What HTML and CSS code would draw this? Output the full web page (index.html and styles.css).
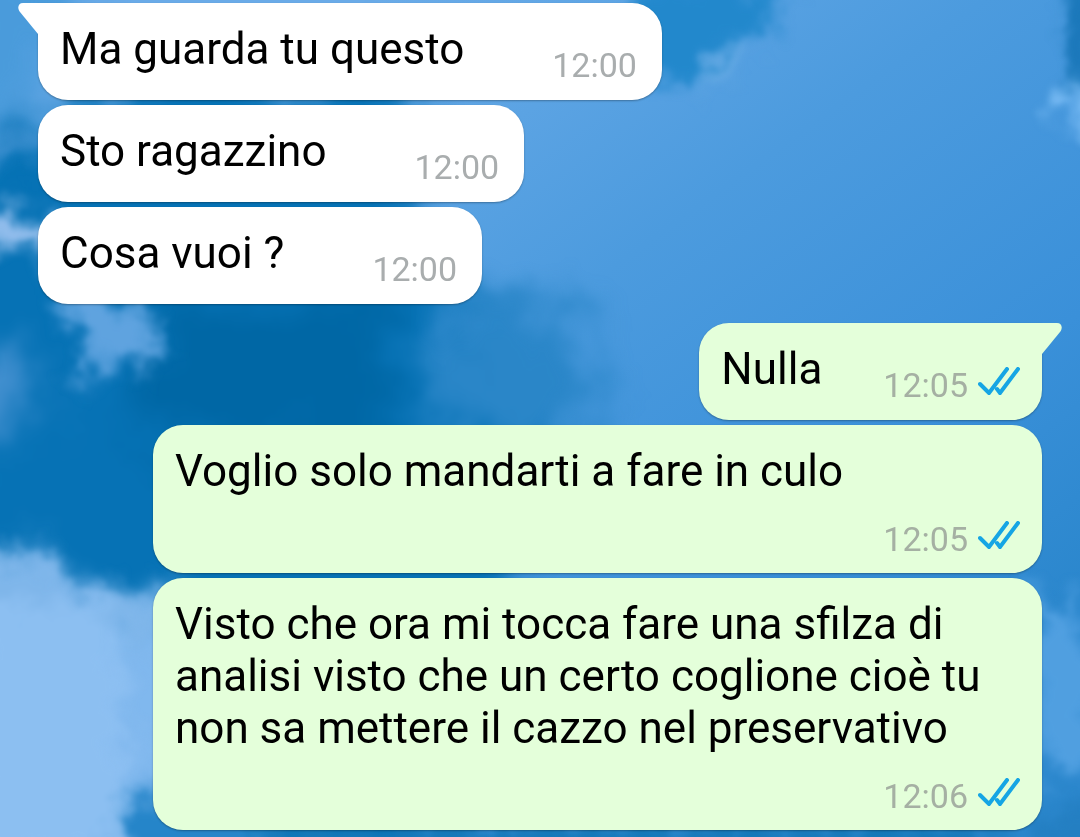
FILE: index.html
```
<!DOCTYPE html>
<html lang="it">
<head>
    <meta charset="UTF-8" />
    <meta name="viewport" content="width=device-width, initial-scale=1" />
    <title>Chat</title>
    <link rel="stylesheet" href="styles.css">
</head>
<body>
    <!-- sky wallpaper -->
    <svg class="wallpaper" viewBox="0 0 1080 837" preserveAspectRatio="none" aria-hidden="true">
        <defs>
            <linearGradient id="sky" x1="0.35" y1="0" x2="1" y2="0.7">
                <stop offset="0" stop-color="#6aabe8" />
                <stop offset="0.4" stop-color="#4c9bde" />
                <stop offset="0.75" stop-color="#3a90d9" />
                <stop offset="1" stop-color="#2b87cd" />
            </linearGradient>
            <filter id="soft" x="-30%" y="-30%" width="160%" height="160%" color-interpolation-filters="sRGB">
                <feTurbulence type="fractalNoise" baseFrequency="0.015" numOctaves="4" seed="3" result="noise" />
                <feGaussianBlur in="SourceGraphic" stdDeviation="20" result="blurred" />
                <feDisplacementMap in="blurred" in2="noise" scale="90" xChannelSelector="R" yChannelSelector="G" />
                <feGaussianBlur stdDeviation="3" />
            </filter>
            <filter id="cloud" x="-40%" y="-40%" width="180%" height="180%" color-interpolation-filters="sRGB">
                <feTurbulence type="fractalNoise" baseFrequency="0.03" numOctaves="4" seed="8" result="noise" />
                <feGaussianBlur in="SourceGraphic" stdDeviation="9" result="blurred" />
                <feDisplacementMap in="blurred" in2="noise" scale="55" xChannelSelector="R" yChannelSelector="G" />
                <feGaussianBlur stdDeviation="2" />
            </filter>
        </defs>
        <rect width="1080" height="837" fill="url(#sky)" />
        <g filter="url(#soft)">
            <path d="M-60 140 L60 130 L120 90 L400 60 L420 250 L450 290 L560 350 L560 450 L400 900 L-60 900 Z" fill="#0672b5" />
            <path d="M160 290 L380 290 L400 450 L120 440 Z" fill="#0067a5" />
            <path d="M440 290 L590 330 L600 450 L440 450 Z" fill="#2a86c8" />
            <path d="M-60 -60 H90 L60 110 L-60 140 Z" fill="#4a9bdb" />
            <path d="M-60 340 L20 370 L50 420 L-60 440 Z" fill="#4490d0" />
            <path d="M-60 560 L60 590 L160 610 L240 640 V900 H-60 Z" fill="#80b8ee" />
        </g>
        <g filter="url(#cloud)">
            <path d="M630 -20 H785 L770 30 L730 46 L690 80 L650 76 Z" fill="#2288cc" />
            <path d="M690 78 L735 50 L760 50 L700 92 Z" fill="#7ab6e8" opacity="0.6" />
            <path d="M1064 -20 H1110 V90 H1070 Z" fill="#1b78ba" />
            <path d="M1060 86 H1110 V124 H1064 Z" fill="#7cbdf5" />
            <path d="M-20 140 L40 142 L48 156 L-20 162 Z" fill="#3f90d0" />
            <path d="M-30 206 L26 208 L46 228 L76 232 L50 256 L-30 242 Z" fill="#92bdec" />
            <path d="M52 290 L120 296 L160 322 L152 362 L112 356 L90 384 L78 340 Z" fill="#5fa3df" />
            <path d="M-30 546 L40 554 L80 586 L160 596 L160 640 L-30 680 Z" fill="#7fb6ea" />
            <path d="M-30 600 H110 L140 860 H-30 Z" fill="#8cbff1" />
            <path d="M124 796 L260 804 V870 H110 Z" fill="#2585c9" />
            <path d="M260 826 H1000 V870 H260 Z" fill="#1478b8" />
            <path d="M1030 588 L1056 600 L1100 650 V770 H1030 Z" fill="#509fe0" />
            <path d="M1030 806 H1110 V870 H1030 Z" fill="#247fc2" />
        </g>
    </svg>

    <main class="chat">
        <div class="message in tail">
            <svg class="tail-shape" viewBox="0 0 20 31" aria-hidden="true"><path d="M20 0H5C0 0-1 5 2 9L20 31Z" /></svg>
            <p class="text">Ma guarda tu questo</p>
            <div class="meta"><time>12:00</time></div>
        </div>
        <div class="message in">
            <p class="text">Sto ragazzino</p>
            <div class="meta"><time>12:00</time></div>
        </div>
        <div class="message in">
            <p class="text">Cosa vuoi ?</p>
            <div class="meta"><time>12:00</time></div>
        </div>

        <div class="message out tail">
            <svg class="tail-shape" viewBox="0 0 20 31" aria-hidden="true"><path d="M0 0H15C20 0 21 5 18 9L0 31Z" /></svg>
            <p class="text">Nulla</p>
            <div class="meta">
                <time>12:05</time>
                <svg class="ticks" viewBox="0 0 42 28" role="img" aria-label="Letto"><path d="M2 17L11 26L29 2M19 22L22 26L40 2" /></svg>
            </div>
        </div>
        <div class="message out long">
            <p class="text">Voglio solo mandarti a fare in culo</p>
            <div class="meta">
                <time>12:05</time>
                <svg class="ticks" viewBox="0 0 42 28" role="img" aria-label="Letto"><path d="M2 17L11 26L29 2M19 22L22 26L40 2" /></svg>
            </div>
        </div>
        <div class="message out long">
            <p class="text">Visto che ora mi tocca fare una sfilza di analisi visto che un certo coglione cioè tu non sa mettere il cazzo nel preservativo</p>
            <div class="meta">
                <time>12:06</time>
                <svg class="ticks" viewBox="0 0 42 28" role="img" aria-label="Letto"><path d="M2 17L11 26L29 2M19 22L22 26L40 2" /></svg>
            </div>
        </div>
    </main>
</body>
</html>
```
FILE: styles.css
```
* {
    box-sizing: border-box;
}
body {
    margin: 0;
    min-height: 100vh;
    background: #3a90d9;
    font-family: Roboto, "Noto Sans", sans-serif;
    color: #000;
}
.wallpaper {
    position: fixed;
    top: 0;
    left: 0;
    width: 100%;
    height: 100%;
    z-index: -1;
}
.chat {
    display: flex;
    flex-direction: column;
    align-items: flex-start;
    gap: 5px;
    padding: 3px 38px 5px;
}
.message {
    position: relative;
    display: flex;
    justify-content: space-between;
    gap: 88px;
    padding: 20px 25px 25px 22px;
    border-radius: 30px;
    box-shadow: 0 1px 2px rgba(0, 0, 0, 0.3);
}
.in {
    background: #fff;
}
.out {
    align-self: flex-end;
    gap: 61px;
    padding-right: 22px;
    background: #e4ffda;
}
.out.tail {
    margin-top: 14px;
}
.in.tail {
    border-top-left-radius: 0;
}
.out.tail {
    border-top-right-radius: 0;
}
.long {
    flex-direction: column;
    gap: 24px;
    width: 100%;
    max-width: 889px;
    padding-bottom: 16px;
}
/* little corner beside the first bubble of a group */
.tail-shape {
    position: absolute;
    top: 0;
    width: 20px;
    height: 31px;
}
.in .tail-shape {
    right: 100%;
    fill: #fff;
}
.out .tail-shape {
    left: 100%;
    fill: #e4ffda;
}
.text {
    margin: 0;
    font-size: 44px;
    line-height: 52px;
}
.meta {
    display: flex;
    align-self: flex-end;
    align-items: flex-start;
    gap: 10px;
    height: 36px;
    margin-bottom: -8px;
    font-size: 34px;
    line-height: 36px;
    color: #a9adae;
}
.long .meta {
    margin-bottom: 0;
}
.out .meta {
    color: #a5b0a3;
}
.ticks {
    width: 42px;
    height: 28px;
    fill: none;
    stroke: #16a5e4;
    stroke-width: 4;
    stroke-linecap: round;
}
```
